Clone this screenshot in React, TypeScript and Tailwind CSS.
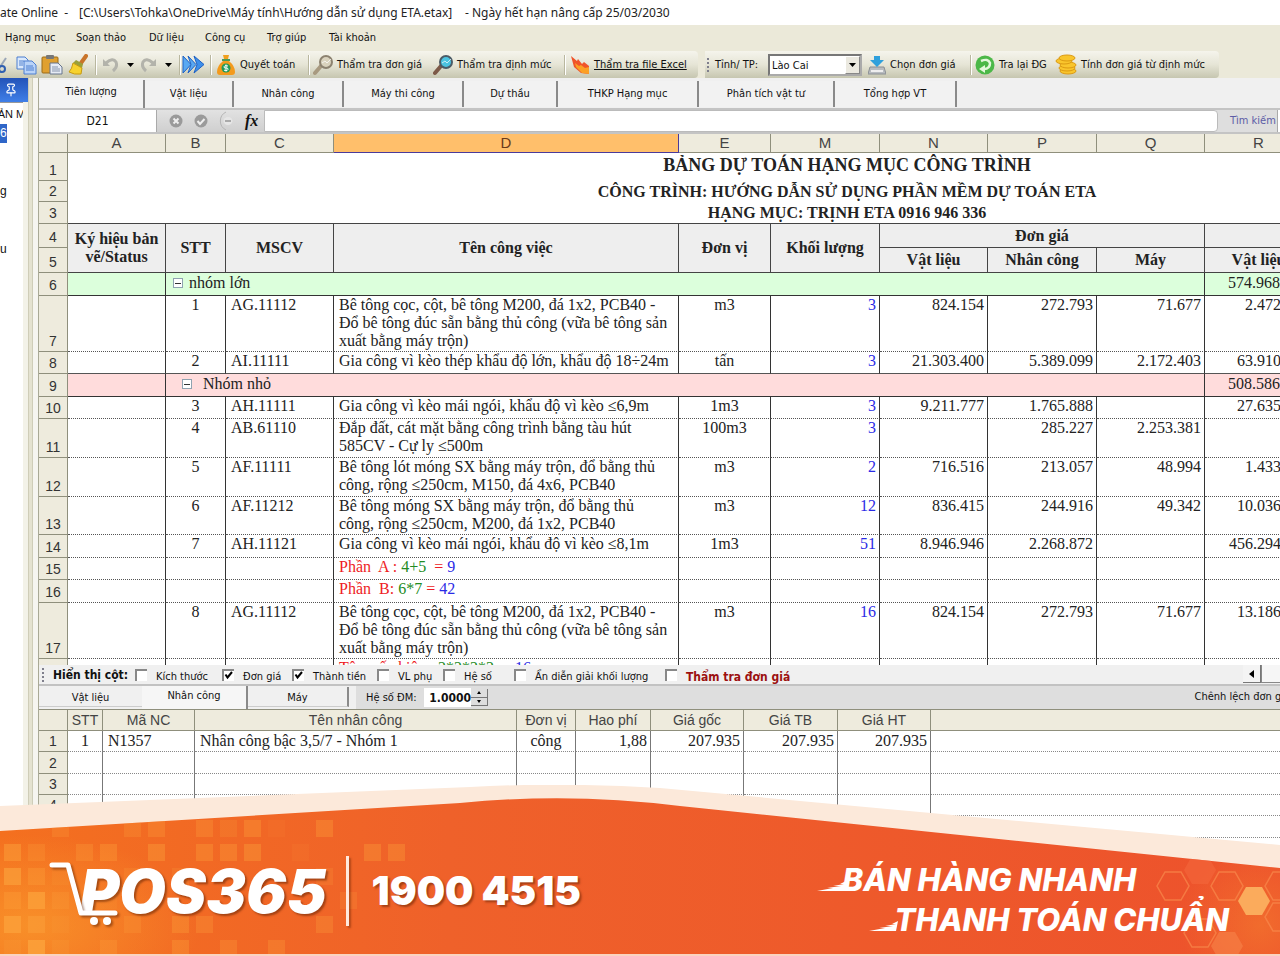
import type { ReactNode } from "react";
import { Pin } from "lucide-react";

const UI = "font-['DejaVu_Sans_Condensed','DejaVu_Sans',sans-serif]";
const SERIF = "font-['Liberation_Serif',serif]";
const ARIAL = "font-['Liberation_Sans',sans-serif]";

const MENU = [
  { label: "Hạng mục", w: "w-[71px]" },
  { label: "Soạn thảo", w: "w-[73px]" },
  { label: "Dữ liệu", w: "w-[56px]" },
  { label: "Công cụ", w: "w-[62px]" },
  { label: "Trợ giúp", w: "w-[62px]" },
  { label: "Tài khoản", w: "w-[70px]" },
];

const TABS = [
  { label: "Vật liệu", w: "w-[89px]" },
  { label: "Nhân công", w: "w-[110px]" },
  { label: "Máy thi công", w: "w-[120px]" },
  { label: "Dự thầu", w: "w-[94px]" },
  { label: "THKP Hạng mục", w: "w-[141px]" },
  { label: "Phân tích vật tư", w: "w-[136px]" },
  { label: "Tổng hợp VT", w: "w-[122px]" },
];

type Row = {
  n: number;
  h: string;
  kind?: "green" | "pink";
  stt?: string;
  code?: string;
  name?: ReactNode;
  unit?: string;
  qty?: string;
  vl?: string;
  nc?: string;
  may?: string;
  total?: string;
};

const BE_TONG_COC = "Bê tông cọc, cột, bê tông M200, đá 1x2, PCB40 -\nĐổ bê tông đúc sẵn bằng thủ công (vữa bê tông sản\nxuất bằng máy trộn)";

const ROWS: Row[] = [
  { n: 6, h: "h-[23px]", kind: "green", name: "nhóm lớn", total: "574.968.715" },
  { n: 7, h: "h-[56px]", stt: "1", code: "AG.11112", name: BE_TONG_COC, unit: "m3", qty: "3", vl: "824.154", nc: "272.793", may: "71.677", total: "2.472.462" },
  { n: 8, h: "h-[22px]", stt: "2", code: "AI.11111", name: "Gia công vì kèo thép khẩu độ lớn, khẩu độ 18÷24m", unit: "tấn", qty: "3", vl: "21.303.400", nc: "5.389.099", may: "2.172.403", total: "63.910.200" },
  { n: 9, h: "h-[23px]", kind: "pink", name: "Nhóm nhỏ", total: "508.586.053" },
  { n: 10, h: "h-[22px]", stt: "3", code: "AH.11111", name: "Gia công vì kèo mái ngói, khẩu độ vì kèo ≤6,9m", unit: "1m3", qty: "3", vl: "9.211.777", nc: "1.765.888", total: "27.635.331" },
  { n: 11, h: "h-[39px]", stt: "4", code: "AB.61110", name: "Đắp đất, cát mặt bằng công trình bằng tàu hút\n585CV - Cự ly ≤500m", unit: "100m3", qty: "3", nc: "285.227", may: "2.253.381" },
  { n: 12, h: "h-[39px]", stt: "5", code: "AF.11111", name: "Bê tông lót móng SX bằng máy trộn, đổ bằng thủ\ncông, rộng ≤250cm, M150, đá 4x6, PCB40", unit: "m3", qty: "2", vl: "716.516", nc: "213.057", may: "48.994", total: "1.433.032" },
  { n: 13, h: "h-[38px]", stt: "6", code: "AF.11212", name: "Bê tông móng SX bằng máy trộn, đổ bằng thủ\ncông, rộng ≤250cm, M200, đá 1x2, PCB40", unit: "m3", qty: "12", vl: "836.415", nc: "244.916", may: "49.342", total: "10.036.980" },
  { n: 14, h: "h-[23px]", stt: "7", code: "AH.11121", name: "Gia công vì kèo mái ngói, khẩu độ vì kèo ≤8,1m", unit: "1m3", qty: "51", vl: "8.946.946", nc: "2.268.872", total: "456.294.246" },
  { n: 15, h: "h-[22px]", name: <Formula label="Phần  A : " expr="4+5" result="9" gap /> },
  { n: 16, h: "h-[23px]", name: <Formula label="Phần  B: " expr="6*7" result="42" /> },
  { n: 17, h: "h-[56px]", stt: "8", code: "AG.11112", name: BE_TONG_COC, unit: "m3", qty: "16", vl: "824.154", nc: "272.793", may: "71.677", total: "13.186.464" },
  { n: 18, h: "h-[23px]", name: <Formula label="Tên  cấu kiện : " expr="2*2*2*2" result="16" gap /> },
];

const LABOR_COLS = ["STT", "Mã NC", "Tên nhân công", "Đơn vị", "Hao phí", "Giá gốc", "Giá TB", "Giá HT"];

const CHECKS = [
  { label: "Kích thước", on: false, w: "w-[87px]" },
  { label: "Đơn giá", on: true, w: "w-[70px]" },
  { label: "Thành tiền", on: true, w: "w-[85px]" },
  { label: "VL phụ", on: false, w: "w-[66px]" },
  { label: "Hệ số", on: false, w: "w-[71px]" },
  { label: "Ẩn diễn giải khối lượng", on: false, w: "w-[151px]" },
];

export default function App() {
  return (
    <div className={`relative flex h-screen flex-col overflow-hidden bg-white text-[11px] text-[#111] ${UI}`}>
      <header className="flex h-[25px] shrink-0 items-center whitespace-pre font-['Noto_Sans',sans-serif] text-[12px] text-[#222]">
        <span className="w-[79px]">ate Online  -</span>
        <span className="w-[386px]">[C:\Users\Tohka\OneDrive\Máy tính\Hướng dẫn sử dụng ETA.etax]</span>
        <span>- Ngày hết hạn nâng cấp 25/03/2030</span>
      </header>
      <nav className="flex h-[26px] shrink-0 items-center bg-[#ebe9d9] pt-px pl-[5px]">
        {MENU.map((m) => (
          <button key={m.label} className={`${m.w} shrink-0 text-left`}>{m.label}</button>
        ))}
      </nav>
      <Toolbar />
      <div className="flex min-h-0 flex-1">
        <SidePanel />
        <main className="flex min-w-0 flex-1 flex-col bg-[#f0f0f0]">
          <Tabs />
          <FormulaBar />
          <div className="h-[531px] shrink-0 overflow-hidden bg-white">
            <EstimateTable />
          </div>
          <ColumnToggles />
          <LaborTabs />
          <div className="min-h-0 flex-1 overflow-hidden bg-white">
            <LaborTable />
          </div>
        </main>
      </div>
      <Banner />
    </div>
  );
}

function Sep() {
  return <span className="h-5 w-px shrink-0 bg-[#b9b79f] shadow-[1px_0_0_#fff]" />;
}

function Tool({ icon, label, className }: { icon: ReactNode; label: string; className: string }) {
  return (
    <button className={`flex shrink-0 items-center gap-1 whitespace-nowrap ${className}`}>
      {icon}
      <span className="pt-[2px]">{label}</span>
    </button>
  );
}

function Toolbar() {
  return (
    <div className="flex h-[27px] shrink-0 items-stretch gap-[7px] bg-[#ebe9d9]">
      <div className="flex w-[698px] shrink-0 items-center rounded-r bg-linear-to-b from-[#f5f4ec] via-[#e6e5d6] to-[#c6c6b0]">
        <button aria-label="Cắt" className="w-4 shrink-0"><CutIcon /></button>
        <button aria-label="Sao chép" className="w-[25px] shrink-0"><CopyIcon /></button>
        <button aria-label="Dán" className="w-[27px] shrink-0"><PasteIcon /></button>
        <button aria-label="Định dạng" className="w-[27px] shrink-0"><BrushIcon /></button>
        <Sep />
        <button aria-label="Hoàn tác" className="flex w-[40px] shrink-0 items-center gap-2 pl-[6px]"><UndoIcon /><Caret /></button>
        <button aria-label="Làm lại" className="flex w-[43px] shrink-0 items-center gap-2 pl-[4px]"><span className="-scale-x-100"><UndoIcon /></span><Caret /></button>
        <Sep />
        <button aria-label="Tiếp" className="w-[30px] shrink-0 pl-[2px]"><ForwardIcon /></button>
        <Sep />
        <Tool className="w-[97px] pl-[5px]" icon={<BagIcon />} label="Quyết toán" />
        <Sep />
        <Tool className="w-[124px] pl-1" icon={<LensIcon glass="#d9d2bd" rim="#8c8270" grip="#a89a80" />} label="Thẩm tra đơn giá" />
        <Tool className="w-[131px]" icon={<LensIcon glass="#4cc3e0" rim="#4b5b66" grip="#7d5a48" />} label="Thẩm tra định mức" />
        <Sep />
        <button className="flex shrink-0 items-center gap-1 whitespace-nowrap pl-[5px]">
          <FlameIcon />
          <span className="pt-[2px] underline">Thẩm tra file Excel</span>
        </button>
      </div>
      <div className="flex w-[514px] shrink-0 items-center rounded-r bg-linear-to-b from-[#f5f4ec] via-[#e6e5d6] to-[#c6c6b0] pl-[2px]">
        <Grip />
        <label htmlFor="province" className="w-[58px] shrink-0 pt-[2px] pl-[5px] whitespace-nowrap">Tỉnh/ TP:</label>
        <div className="relative h-[22px] w-[94px] shrink-0">
          <select id="province" className="h-full w-full appearance-none border-2 border-[#777] border-r-[#aaa] border-b-[#aaa] bg-white pt-[2px] pl-[2px] text-[11px]">
            <option>Lào Cai</option>
          </select>
          <span className="pointer-events-none absolute inset-y-[2px] right-[2px] flex w-[15px] items-center justify-center border border-[#888] border-t-white border-l-white bg-[#ebe9e0]">
            <Caret />
          </span>
        </div>
        <Tool className="w-[108px] pl-[6px]" icon={<DriveIcon />} label="Chọn đơn giá" />
        <Sep />
        <Tool className="w-[84px] pl-1" icon={<RefreshIcon />} label="Tra lại ĐG" />
        <Tool className="" icon={<CoinsIcon />} label="Tính đơn giá từ định mức" />
      </div>
    </div>
  );
}

function SidePanel() {
  return (
    <aside className="flex w-[39px] shrink-0 bg-[#f3f2e8]">
      <div className="w-[28px] shrink-0">
        <div className="flex h-[24px] items-center bg-linear-to-b from-[#2453b8] to-[#3f7fe8] pl-[4px] text-white">
          <button aria-label="Ghim"><Pin className="h-[14px] w-[14px]" /></button>
        </div>
        <div className={`mr-[5px] h-full overflow-hidden border-t border-[#999] bg-white text-[12px] leading-[19px] ${ARIAL}`}>
          <p className="flex h-[21px] justify-center text-[11px] leading-[22px] whitespace-nowrap">ẢN M</p>
          <p className="h-[19px] w-[7px] bg-[#2f66c8] text-white">6</p>
          <p className="mt-[39px] h-[19px]">g</p>
          <p className="mt-[39px] h-[19px]">u</p>
        </div>
      </div>
      <div className="w-[5px] border-x border-[#cfcdb8] bg-[#e4e2d0]" />
      <div className="flex-1 border-r border-[#a9a996] bg-[#f6f5f0]" />
    </aside>
  );
}

function Tabs() {
  return (
    <div role="tablist" className="flex h-[30px] shrink-0 items-end bg-[#f0f0f0] pt-[2px]">
      <button role="tab" aria-selected className="h-[28px] w-[106px] shrink-0 border-r-2 border-[#8a8a8a] bg-[#f4f4f4] pb-[3px]">Tiên lượng</button>
      {TABS.map((t) => (
        <button key={t.label} role="tab" aria-selected={false} className={`mb-[1px] h-[26px] shrink-0 border-r-2 border-[#8a8a8a] bg-[#f2f2f2] ${t.w}`}>{t.label}</button>
      ))}
    </div>
  );
}

function FormulaBar() {
  return (
    <div className="flex h-[26px] shrink-0 items-center border-y-2 border-[#c4c4c4] bg-[#dedede]">
      <input aria-label="Ô" defaultValue="D21" className="h-full w-[118px] shrink-0 border-r border-[#aaa] bg-white text-center text-[12px]" />
      <div className="flex h-full w-[107px] shrink-0 items-center gap-[11px] bg-linear-to-b from-[#e2e2e2] to-[#cfcfcf] pl-3">
        <svg width="14" height="14" viewBox="0 0 14 14"><circle cx="7" cy="7" r="6.5" fill="#9a9a9a" /><path d="M4.500 4.500l5 5M9.500 4.500l-5 5" stroke="#eee" strokeWidth="2" /></svg>
        <svg width="14" height="14" viewBox="0 0 14 14"><circle cx="7" cy="7" r="6.500" fill="#9a9a9a" /><path d="M3.500 7l2.500 3 4.500-5" stroke="#eee" strokeWidth="2" fill="none" /></svg>
        <svg width="15" height="20" viewBox="0 0 15 20"><path d="M7 1a10 10 0 0 0 0 18" fill="none" stroke="#b5b5b5" /><ellipse cx="9" cy="10" rx="4.500" ry="4" fill="#e6e6e6" /><path d="M6 10h6" stroke="#aaa" strokeWidth="2" /></svg>
        <span className={`text-[16px] font-bold italic ${SERIF}`}>fx</span>
      </div>
      <input aria-label="Công thức" className="h-full min-w-0 flex-1 rounded-r border border-[#bbb] bg-white" />
      <label htmlFor="search" className="w-[59px] shrink-0 pt-px pl-[12px] whitespace-nowrap text-[#5c5ca6]">Tìm kiếm</label>
      <input id="search" className="h-full w-[3px] shrink-0 border-l border-[#aaa] bg-white" />
    </div>
  );
}

const HEAD = "border-r border-b border-[#8f8f7c] bg-[#eeebdd] p-0 font-normal";
const CAP = "border-r border-b border-[#444] bg-[#eee] p-0 font-bold";

function RowNo({ n }: { n: number }) {
  return <th scope="row" className={`${HEAD} ${ARIAL} align-bottom text-[14px] leading-[19px] text-[#333]`}>{n}</th>;
}

function EstimateTable() {
  return (
    <table className={`w-full min-w-[1587px] table-fixed border-separate border-spacing-0 text-[16px] leading-[18px] text-[#222] ${SERIF}`}>
      <colgroup>
        <col className="w-[29px]" />
        <col className="w-[98px]" />
        <col className="w-[60px]" />
        <col className="w-[108px]" />
        <col className="w-[345px]" />
        <col className="w-[92px]" />
        <col className="w-[109px]" />
        <col className="w-[108px]" />
        <col className="w-[109px]" />
        <col className="w-[108px]" />
        <col className="w-[108px]" />
        <col />
      </colgroup>
      <thead>
        <tr className={`h-[19px] text-[15px] text-[#444] ${ARIAL}`}>
          <th className={HEAD} />
          {["A", "B", "C"].map((c) => <th key={c} className={HEAD}>{c}</th>)}
          <th className="border-r border-b border-[#4a3a9a] bg-[#ffbf6b] p-0 font-normal text-[#6a3a1a]">D</th>
          {["E", "M", "N", "P", "Q", "R"].map((c) => <th key={c} className={HEAD}>{c}</th>)}
          <th className={HEAD} />
        </tr>
      </thead>
      <tbody>
        <tr className="h-[28px]">
          <RowNo n={1} />
          <td colSpan={11} className="p-0 pb-[4px] text-center text-[18px] leading-[22px] font-bold">BẢNG DỰ TOÁN HẠNG MỤC CÔNG TRÌNH</td>
        </tr>
        <tr className="h-[21px]">
          <RowNo n={2} />
          <td colSpan={11} className="p-0 text-center font-bold">CÔNG TRÌNH: HƯỚNG DẪN SỬ DỤNG PHẦN MỀM DỰ TOÁN ETA</td>
        </tr>
        <tr className="h-[22px]">
          <RowNo n={3} />
          <td colSpan={11} className="border-b border-[#444] p-0 text-center font-bold">HẠNG MỤC: TRỊNH ETA 0916 946 336</td>
        </tr>
        <tr className="h-[24px]">
          <RowNo n={4} />
          <th rowSpan={2} className={CAP}>Ký hiệu bản<br />vẽ/Status</th>
          <th rowSpan={2} className={CAP}>STT</th>
          <th rowSpan={2} className={CAP}>MSCV</th>
          <th rowSpan={2} className={CAP}>Tên công việc</th>
          <th rowSpan={2} className={CAP}>Đơn vị</th>
          <th rowSpan={2} className={CAP}>Khối lượng</th>
          <th colSpan={3} className={CAP}>Đơn giá</th>
          <th colSpan={2} className={CAP} />
        </tr>
        <tr className="h-[25px]">
          <RowNo n={5} />
          <th className={CAP}>Vật liệu</th>
          <th className={CAP}>Nhân công</th>
          <th className={CAP}>Máy</th>
          <th className={CAP}>Vật liệu</th>
          <th className={CAP} />
        </tr>
        {ROWS.map((r) => r.kind ? <GroupRow key={r.n} r={r} /> : <ItemRow key={r.n} r={r} />)}
      </tbody>
    </table>
  );
}

function GroupRow({ r }: { r: Row }) {
  const green = r.kind === "green";
  const cell = `border-r border-b border-[#333] p-0 align-top leading-[20px] ${green ? "bg-[#dcffdc]" : "bg-[#ffdcdc]"}`;
  return (
    <tr className={r.h}>
      <RowNo n={r.n} />
      <td className={cell} />
      <td colSpan={8} className={cell}>
        <div className={`flex items-center ${green ? "gap-[6px] pl-[7px]" : "gap-[11px] pl-[16px]"}`}>
          <button aria-label="Thu gọn" className="flex h-[10px] w-[10px] items-center justify-center border border-[#8fa3b0] bg-white">
            <span className="h-px w-[6px] bg-[#333]" />
          </button>
          <span>{r.name}</span>
        </div>
      </td>
      <td className={`${cell} pr-[4px] text-right`}>{r.total}</td>
      <td className={cell} />
    </tr>
  );
}

function ItemRow({ r }: { r: Row }) {
  const solid = r.n === 8;
  const cell = `border-r border-r-[#333] border-b border-b-[#555] ${solid ? "" : "[border-bottom-style:dotted]"} p-0 align-top`;
  const num = `${cell} pr-[3px] text-right`;
  return (
    <tr className={r.h}>
      <RowNo n={r.n} />
      <td className={cell} />
      <td className={`${cell} text-center`}>{r.stt}</td>
      <td className={`${cell} pl-[5px]`}>{r.code}</td>
      <td className={`${cell} pl-[5px] whitespace-pre`}>{r.name}</td>
      <td className={`${cell} text-center`}>{r.unit}</td>
      <td className={`${num} text-[#2a2ae6]`}>{r.qty}</td>
      <td className={num}>{r.vl}</td>
      <td className={num}>{r.nc}</td>
      <td className={num}>{r.may}</td>
      <td className={num}>{r.total}</td>
      <td className={cell} />
    </tr>
  );
}

function Formula({ label, expr, result, gap }: { label: string; expr: string; result: string; gap?: boolean }) {
  return (
    <span className="text-[#ee1c24]">
      {label}
      <span className="text-[#228b22]">{expr}</span>
      {gap ? "  = " : " = "}
      <span className="text-[#2a2ae6]">{result}</span>
    </span>
  );
}

function Check({ label, on, className, bold }: { label: string; on: boolean; className: string; bold?: boolean }) {
  return (
    <label className={`flex shrink-0 items-center gap-[9px] whitespace-nowrap ${className}`}>
      <span className="grid shrink-0">
        <input type="checkbox" defaultChecked={on} className="peer col-start-1 row-start-1 h-3 w-3 appearance-none border-t-2 border-l-2 border-[#888] bg-white" />
        <svg className="pointer-events-none invisible col-start-1 row-start-1 peer-checked:visible" width="12" height="12" viewBox="0 0 12 12">
          <path d="M3.500 5.500l2 3 4.500-5.500" fill="none" stroke="#000" strokeWidth="2" />
        </svg>
      </span>
      <span className={`pt-[5px] ${bold ? "text-[12px] font-bold text-[#9c1010]" : ""}`}>{label}</span>
    </label>
  );
}

function ColumnToggles() {
  return (
    <div className="flex h-[21px] shrink-0 items-center border-b-2 border-[#c2c2c2] bg-[#f0f0f0] pl-[3px]">
      <Grip />
      <span className="w-[90px] shrink-0 pl-[8px] text-[12px] font-bold whitespace-nowrap">Hiển thị cột:</span>
      {CHECKS.map((c) => <Check key={c.label} label={c.label} on={c.on} className={c.w} />)}
      <Check label="Thẩm tra đơn giá" on={false} bold className="" />
      <div className="ml-auto flex h-full shrink-0">
        <button aria-label="Cuộn trái" className="flex h-[18px] w-[18px] items-center justify-center border-r border-b border-[#777] bg-[#f4f4f4]">
          <svg width="5" height="8" viewBox="0 0 5 8"><path d="M5 0v8L0 4z" fill="#000" /></svg>
        </button>
        <div className="h-[18px] w-[19px] border-b border-l border-[#888] bg-[#f6f6f6]" />
      </div>
    </div>
  );
}

function LaborTabs() {
  return (
    <div className="flex h-[23px] shrink-0 items-center overflow-hidden bg-[#dedede]">
      <div role="tablist" className="flex h-full w-[317px] shrink-0 items-end bg-[#f0f0f0]">
        <button role="tab" aria-selected={false} className="mb-[2px] h-[20px] w-[103px] border-b border-[#ccc] pt-[3px]">Vật liệu</button>
        <button role="tab" aria-selected className="h-[23px] w-[106px] border-r-2 border-[#8a8a8a] bg-[#f6f6f6] pb-[2px]">Nhân công</button>
        <button role="tab" aria-selected={false} className="mb-[2px] h-[20px] w-[101px] border-r-2 border-b border-[#8a8a8a] border-b-[#ccc] pt-[3px]">Máy</button>
      </div>
      <label htmlFor="factor" className="w-[68px] shrink-0 pt-px pl-[10px] whitespace-nowrap">Hệ số ĐM:</label>
      <input id="factor" defaultValue="1.0000" className="h-[19px] w-[47px] shrink-0 bg-white text-right text-[12px] font-bold" />
      <div className="flex h-[17px] w-[17px] shrink-0 flex-col border-r border-b border-[#777]">
        <button aria-label="Tăng" className="flex flex-1 items-center justify-center border-b border-[#777]"><svg width="4" height="3" viewBox="0 0 4 3"><path d="M2 0l2 3H0z" /></svg></button>
        <button aria-label="Giảm" className="flex flex-1 items-center justify-center"><svg width="4" height="3" viewBox="0 0 4 3"><path d="M2 3l2-3H0z" /></svg></button>
      </div>
      <span className="-mr-[10px] ml-auto shrink-0 whitespace-nowrap">Chênh lệch đơn giá</span>
    </div>
  );
}

function LaborTable() {
  const line = "border-b border-b-[#888] [border-bottom-style:dotted] p-0";
  const cell = `${line} border-r border-r-[#777]`;
  return (
    <table className={`w-full table-fixed border-separate border-spacing-0 border-t border-[#8f8f7c] text-[16px] leading-[18px] text-[#222] ${SERIF}`}>
      <colgroup>
        <col className="w-[29px]" />
        <col className="w-[35px]" />
        <col className="w-[92px]" />
        <col className="w-[322px]" />
        <col className="w-[59px]" />
        <col className="w-[75px]" />
        <col className="w-[93px]" />
        <col className="w-[94px]" />
        <col className="w-[93px]" />
        <col />
      </colgroup>
      <thead>
        <tr className={`h-[21px] text-[14px] text-[#444] ${ARIAL}`}>
          <th className={HEAD} />
          {LABOR_COLS.map((c) => <th key={c} className={HEAD}>{c}</th>)}
          <th className="border-b border-[#8f8f7c] bg-[#eeebdd] p-0" />
        </tr>
      </thead>
      <tbody>
        <tr className="h-[21px]">
          <RowNo n={1} />
          <td className={`${cell} text-center`}>1</td>
          <td className={`${cell} pl-[5px]`}>N1357</td>
          <td className={`${cell} pl-[5px]`}>Nhân công bậc 3,5/7 - Nhóm 1</td>
          <td className={`${cell} text-center`}>công</td>
          <td className={`${cell} pr-[3px] text-right`}>1,88</td>
          <td className={`${cell} pr-[3px] text-right`}>207.935</td>
          <td className={`${cell} pr-[3px] text-right`}>207.935</td>
          <td className={`${cell} pr-[3px] text-right`}>207.935</td>
          <td className={line} />
        </tr>
        {[2, 3, 4, 5, 6].map((n) => (
          <tr key={n} className={n % 3 === 2 ? "h-[22px]" : "h-[21px]"}>
            <RowNo n={n} />
            {LABOR_COLS.map((c) => <td key={c} className={cell} />)}
            <td className={line} />
          </tr>
        ))}
      </tbody>
    </table>
  );
}

// column, row, opacity on a 24px grid
const SQUARES = [
  [2, 0, 0.25], [5, 0, 0.25], [6, 0, 0.3], [8, 0, 0.3], [9, 0, 0.2], [10, 0, 0.35], [11, 0, 0.08], [13, 0, 0.35],
  [0, 1, 0.5], [1, 1, 0.25], [3, 1, 0.3], [4, 1, 0.35], [6, 1, 0.4], [8, 1, 0.35], [9, 1, 0.35], [10, 1, 0.4], [12, 1, 0.1], [15, 1, 0.35], [16, 1, 0.35],
  [0, 2, 0.7], [1, 2, 0.35], [2, 2, 0.15], [5, 2, 0.2], [7, 2, 0.2], [13, 2, 0.2],
  [0, 3, 0.35], [1, 3, 0.8], [2, 3, 0.25], [4, 3, 0.15], [14, 3, 0.2],
  [0, 4, 0.8], [1, 4, 0.5], [2, 4, 0.15], [5, 4, 0.25], [7, 4, 0.35], [8, 4, 0.3], [13, 4, 0.3],
  [0, 5, 0.2], [1, 5, 0.9], [2, 5, 0.2], [4, 5, 0.3], [7, 5, 0.35], [9, 5, 0.3], [11, 5, 0.3],
];

const HEX = "M-16 0L-8-14H8L16 0L8 14H-8z";

function Banner() {
  return (
    <div className="absolute inset-x-0 bottom-0 h-[171px] overflow-hidden border-b-2 border-[#fbd3c0] font-['Inter',sans-serif] text-white">
      <svg className="absolute inset-0 h-full w-full" viewBox="0 0 1280 169" preserveAspectRatio="none">
        <defs>
          <linearGradient id="orange" x1="0" x2="1" y1="0" y2="0">
            <stop offset="0" stopColor="#f4701f" />
            <stop offset="0.35" stopColor="#ef612a" />
            <stop offset="1" stopColor="#ed522c" />
          </linearGradient>
          <radialGradient id="glow">
            <stop offset="0" stopColor="#fba52f" stopOpacity="0.6" />
            <stop offset="1" stopColor="#fba52f" stopOpacity="0" />
          </radialGradient>
          <clipPath id="hill"><path d="M0 46L460 18Q570 7 680 21L1280 83V169H0z" /></clipPath>
        </defs>
        <path d="M0 21L470 2Q560-3 660 3L1280 60V169H0z" fill="#fce9da" />
        <g clipPath="url(#hill)">
          <rect width="1280" height="169" fill="url(#orange)" />
          <ellipse cx="30" cy="140" rx="170" ry="90" fill="url(#glow)" />
          {SQUARES.map(([c, r, o]) => <rect key={`${c}-${r}`} x={4 + c * 24} y={35 + r * 24} width="17" height="17" fill="#fba03a" opacity={o} />)}
          <circle cx="1260" cy="140" r="80" fill="url(#glow)" opacity="0.5" />
          <g fill="none" stroke="#f98a4c" strokeWidth="1.500" opacity="0.7">
            <path d={HEX} transform="translate(1173 101)" />
            <path d={HEX} transform="translate(1227 101)" />
            <path d={HEX} transform="translate(1281 101)" />
            <path d={HEX} transform="translate(1281 132)" />
            <path d={HEX} transform="translate(1200 148)" />
          </g>
          <path d={HEX} transform="translate(1200 85)" fill="#f4673c" opacity="0.6" />
          <path d={HEX} transform="translate(1227 161)" fill="#f7844a" opacity="0.6" />
          <path d={HEX} transform="translate(1254 116)" fill="#fbab5c" />
        </g>
      </svg>
      <div className="relative flex h-full items-center pt-[42px] pl-[49px]">
        <div className="flex shrink-0 items-center">
          <svg width="70" height="70" viewBox="0 0 70 70" className="drop-shadow-[2px_2px_1px_rgba(90,30,0,0.5)]" fill="none" stroke="#fff" strokeWidth="5" strokeLinecap="round" strokeLinejoin="round">
            <path d="M3 9h16l13 48h34" />
            <g fill="#fff" stroke="none">
              <circle cx="45" cy="65" r="4" />
              <circle cx="58" cy="65" r="4" />
            </g>
          </svg>
          <strong className="-ml-[39px] text-[60px] leading-[60px] font-black italic [text-shadow:2px_2px_2px_rgba(90,30,0,0.5)]">POS365</strong>
        </div>
        <span className="ml-[19px] h-[70px] w-[3px] shrink-0 bg-[#ffe9dd] shadow-[2px_2px_2px_rgba(90,30,0,0.4)]" />
        <strong className="ml-[23px] shrink-0 text-[40px] leading-[60px] font-black [text-shadow:2px_2px_2px_rgba(90,30,0,0.5)]">1900 4515</strong>
        <div className="mt-[18px] mr-[51px] ml-auto shrink-0 text-[31px] leading-[40px] font-extrabold whitespace-nowrap italic">
          <p className="flex items-center"><Streak />BÁN HÀNG NHANH</p>
          <p className="flex items-center pl-[52px]"><Streak />THANH TOÁN CHUẨN</p>
        </div>
      </div>
    </div>
  );
}

function Streak() {
  return (
    <svg width="34" height="22" viewBox="0 0 34 22" className="-mr-[8px]" fill="#fff">
      <path d="M0 22l16-3h-6l14-2h-8l11-2h-4l6-3-2 10z" />
    </svg>
  );
}

function Grip() {
  return (
    <svg width="3" height="16" viewBox="0 0 3 16" className="shrink-0" fill="#7f7f8c">
      <path d="M0 1h2v2H0zM0 5h2v2H0zM0 9h2v2H0zM0 13h2v2H0z" />
    </svg>
  );
}

function Caret() {
  return <svg width="7" height="4" viewBox="0 0 7 4" className="shrink-0"><path d="M0 0h7L3.500 4z" fill="#000" /></svg>;
}

function CutIcon() {
  return (
    <svg width="7" height="20" viewBox="0 0 7 20">
      <path d="M0 12L6 3" stroke="#9aa6b8" strokeWidth="2" />
      <circle cx="2" cy="14" r="3" fill="none" stroke="#2f5fb0" strokeWidth="2" />
    </svg>
  );
}

function CopyIcon() {
  return (
    <svg width="21" height="20" viewBox="0 0 21 20" fill="#dbe9fb" stroke="#4d7fd0">
      <path d="M1 2h8l3 3v9H1z" />
      <path d="M8 6h8l4 4v9H8z" fill="#b9d3f8" />
      <path d="M3 6h5M3 8h4M3 10h4M10 11h7M10 13h8M10 15h8" strokeWidth="1" />
    </svg>
  );
}

function PasteIcon() {
  return (
    <svg width="22" height="20" viewBox="0 0 22 20">
      <rect x="1" y="2" width="16" height="16" rx="1" fill="#e0a030" stroke="#9a6a18" />
      <rect x="5" y="0" width="8" height="4" rx="1" fill="#777" />
      <path d="M9 8h8l4 4v7H9z" fill="#e6ebf5" stroke="#66748c" />
      <path d="M11 12h6M11 14h8M11 16h8" stroke="#8795ad" />
    </svg>
  );
}

function BrushIcon() {
  return (
    <svg width="20" height="21" viewBox="0 0 20 21">
      <path d="M18 2l-5 7" stroke="#c9742a" strokeWidth="4" strokeLinecap="round" />
      <path d="M8 6l7 4-1 4-9-5z" fill="#9aa03a" />
      <path d="M5 9l9 5-1 6q-7 1-12-2 3-3 4-9z" fill="#f7d22e" stroke="#c79a10" />
    </svg>
  );
}

function UndoIcon() {
  return (
    <svg width="17" height="18" viewBox="0 0 17 18" className="shrink-0">
      <path d="M1 3v7h7z" fill="#b3b3ab" />
      <path d="M4 7q7-6 10-1 2 5-3 9" fill="none" stroke="#b3b3ab" strokeWidth="3" />
    </svg>
  );
}

function ForwardIcon() {
  return (
    <svg width="23" height="19" viewBox="0 0 23 19" fill="#5aa9f2" stroke="#1f62c4">
      <path d="M1 1l8 8.500-8 8.500z" />
      <path d="M6 1l8 8.500-8 8.500 3-8.500z" />
      <path d="M12 1l10 8.500-10 8.500 3-8.500z" fill="#3d8fea" />
    </svg>
  );
}

function BagIcon() {
  return (
    <svg width="20" height="22" viewBox="0 0 20 22" className="shrink-0">
      <path d="M7 1h6l-1 4H8z" fill="#f0a01e" />
      <path d="M7 7h6q6 5 6 11 0 3-3 3H4q-3 0-3-3 0-6 6-11z" fill="#f39a1c" />
      <path d="M6 5h8v2H6z" fill="#4a9a5a" />
      <circle cx="10" cy="14" r="4.500" fill="#1f9a58" />
      <path d="M12 12q-4-1-4 .8t2 1.200 2 1.400-4 .8M10 10.500v7" stroke="#fff" fill="none" />
    </svg>
  );
}

function LensIcon({ glass, rim, grip }: { glass: string; rim: string; grip: string }) {
  return (
    <svg width="20" height="22" viewBox="1 0 20 22" className="shrink-0">
      <path d="M9 12l-6 7" stroke={grip} strokeWidth="4" strokeLinecap="round" />
      <circle cx="14" cy="8" r="6" fill={glass} stroke={rim} strokeWidth="2" />
      <path d="M10 9l3-2 2 2 4-4" fill="none" stroke="#fff" opacity="0.7" />
    </svg>
  );
}

function FlameIcon() {
  return (
    <svg width="20" height="20" viewBox="0 0 20 20" className="shrink-0">
      <path d="M1 1l6 5 1-2 4 5 2-2 5 4v8l-8-1-7-6z" fill="#f0542a" />
      <path d="M5 8l4 3 2-1 4 3 4-1v7l-7-1-6-6z" fill="#fba024" />
    </svg>
  );
}

function DriveIcon() {
  return (
    <svg width="18" height="20" viewBox="1 0 18 20" className="shrink-0">
      <path d="M3 12h14l2 7H1z" fill="#b8bcc0" stroke="#8a8f94" />
      <path d="M4 16h12" stroke="#eee" strokeWidth="2" />
      <path d="M7 1h6v4h4l-7 7-7-7h4z" fill="#2fa0dc" />
    </svg>
  );
}

function RefreshIcon() {
  return (
    <svg width="20" height="20" viewBox="0 0 20 20" className="shrink-0">
      <circle cx="10" cy="10" r="9.500" fill="#4cb848" />
      <path d="M6 6q7-3 9 2 0 6-6 6" fill="none" stroke="#e4f8dc" strokeWidth="2.500" />
      <path d="M10 10v8l-6-4z" fill="#e4f8dc" />
    </svg>
  );
}

function CoinsIcon() {
  return (
    <svg width="22" height="21" viewBox="0 0 22 21" className="shrink-0" fill="#f9c52c" stroke="#dc9a12">
      <ellipse cx="13" cy="17" rx="8" ry="3" />
      <ellipse cx="12" cy="14" rx="8" ry="3" />
      <ellipse cx="13" cy="11" rx="8" ry="3" />
      <ellipse cx="9" cy="7" rx="8" ry="3" />
      <ellipse cx="12" cy="4" rx="8" ry="3" />
    </svg>
  );
}
